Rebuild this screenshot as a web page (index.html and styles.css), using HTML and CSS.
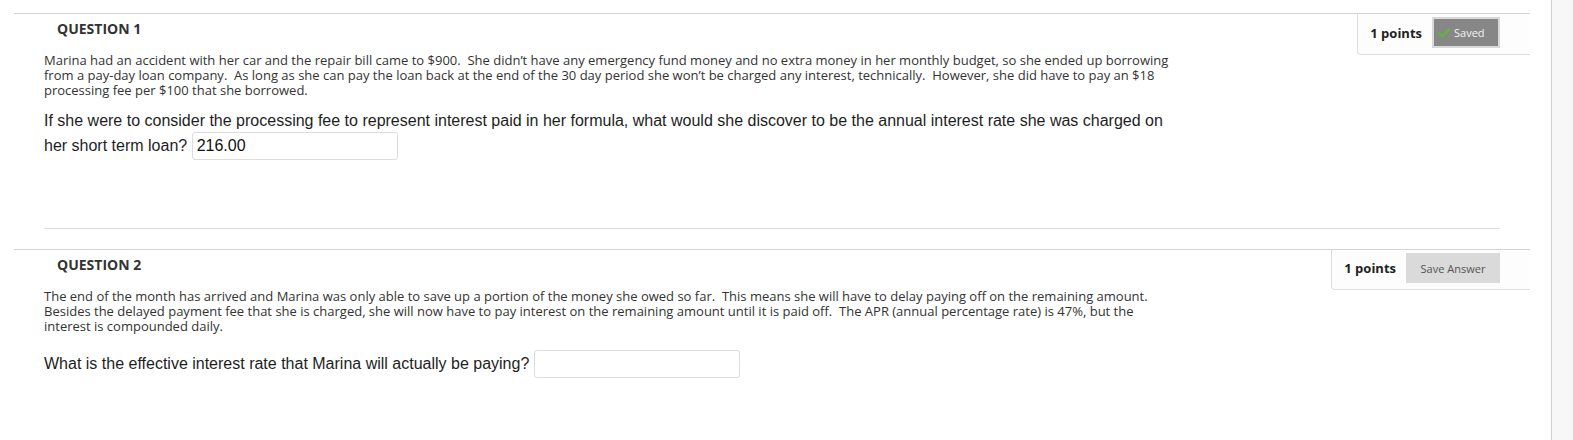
FILE: index.html
```html
<!DOCTYPE html>
<html lang="en">
<head>
<meta charset="utf-8">
<title>Questions</title>
<link rel="stylesheet" href="styles.css">
</head>
<body>
<main class="content">
  <section class="question">
    <div class="points">
      <span class="points-label">1 points</span>
      <button class="btn btn-saved" type="button">
        <svg class="check" width="12" height="10" viewBox="0 0 12 10"><path d="M1 5.2 L4.3 8.4 L11 1.4" fill="none" stroke="#5fb83a" stroke-width="2.2" stroke-linecap="round" stroke-linejoin="round"/></svg>
        <span>Saved</span>
      </button>
    </div>
    <h3 class="q-label">QUESTION 1</h3>
    <div class="q-body">
      <p class="stem">Marina had an accident with her car and the repair bill came to $900.&nbsp; She didn’t have any emergency fund money and no extra money in her monthly budget, so she ended up borrowing from a pay-day loan company.&nbsp; As long as she can pay the loan back at the end of the 30 day period she won’t be charged any interest, technically.&nbsp; However, she did have to pay an $18 processing fee per $100 that she borrowed.</p>
      <p class="prompt">If she were to consider the processing fee to represent interest paid in her formula, what would she discover to be the annual interest rate she was charged on her short term loan? <input class="answer" type="text" value="216.00"></p>
    </div>
  </section>

  <section class="question question-next">
    <div class="points">
      <span class="points-label">1 points</span>
      <button class="btn btn-save" type="button">Save Answer</button>
    </div>
    <h3 class="q-label">QUESTION 2</h3>
    <div class="q-body q-body-last">
      <p class="stem">The end of the month has arrived and Marina was only able to save up a portion of the money she owed so far.&nbsp; This means she will have to delay paying off on the remaining amount.&nbsp; Besides the delayed payment fee that she is charged, she will now have to pay interest on the remaining amount until it is paid off.&nbsp; The APR (annual percentage rate) is 47%, but the interest is compounded daily.</p>
      <p class="prompt">What is the effective interest rate that Marina will actually be paying? <input class="answer" type="text" value=""></p>
    </div>
  </section>
</main>
<aside class="sidebar"></aside>
</body>
</html>
```

FILE: styles.css
```css
html, body {
  height: 100%;
}

body {
  margin: 0;
  display: flex;
  min-height: 100vh;
  font-family: "Open Sans", "DejaVu Sans", sans-serif;
  color: #333;
  background: #fff;
  overflow: hidden;
}

.content {
  flex: 1;
  padding-top: 13px;
}

.sidebar {
  width: 21px;
  flex: none;
  border-left: 1px solid #cfcfcf;
  background: #f7f7f7;
}

.question {
  margin-left: 14px;
  width: 1516px;
  border-top: 1px solid #d3d3d3;
}

.question-next {
  margin-top: 20px;
}

.points {
  float: right;
  display: flex;
  align-items: center;
  padding: 3px 30px 6px 12px;
  border-left: 1px solid #dedede;
  border-bottom: 1px solid #dedede;
  border-bottom-left-radius: 4px;
  background: #fdfdfd;
}

.points-label {
  font-size: 13px;
  font-weight: 700;
  line-height: 18px;
  color: #222;
  margin-right: 10px;
}

.btn {
  font-family: "Open Sans", "DejaVu Sans", sans-serif;
  font-size: 11px;
  margin: 0;
  cursor: pointer;
}

.btn-saved {
  box-sizing: border-box;
  width: 68px;
  height: 31px;
  border: 2px solid #d9d9d9;
  background: #878787;
  color: #f3f3f3;
  display: flex;
  align-items: center;
  gap: 4px;
  padding: 0 0 0 4px;
}

.check {
  display: block;
  flex: none;
}

.btn-save {
  box-sizing: border-box;
  width: 94px;
  height: 30px;
  border: none;
  background: #dadada;
  color: #555;
  padding: 0;
}

.q-label {
  margin: 5px 0 0 43px;
  font-size: 14px;
  font-weight: 700;
  line-height: 19px;
  color: #333;
}

.q-body {
  margin: 15px 30px 0;
  padding-bottom: 66px;
  border-bottom: 1px solid #dcdcdc;
}

.q-body-last {
  border-bottom: none;
}

.stem {
  margin: 0;
  width: 1128px;
  font-size: 13px;
  line-height: 15px;
  color: #333;
}

.prompt {
  margin: 14px 0 0;
  width: 1128px;
  font-family: "Liberation Sans", Arial, sans-serif;
  font-size: 16px;
  line-height: normal;
  color: #1e1e1e;
}

.answer {
  box-sizing: border-box;
  width: 206px;
  height: 28px;
  margin: 2px 0;
  padding: 0 4px;
  border: 1px solid #dcdcdc;
  border-radius: 3px;
  font-family: "Liberation Sans", Arial, sans-serif;
  font-size: 16px;
  color: #111;
  background: #fff;
  vertical-align: baseline;
}
```
